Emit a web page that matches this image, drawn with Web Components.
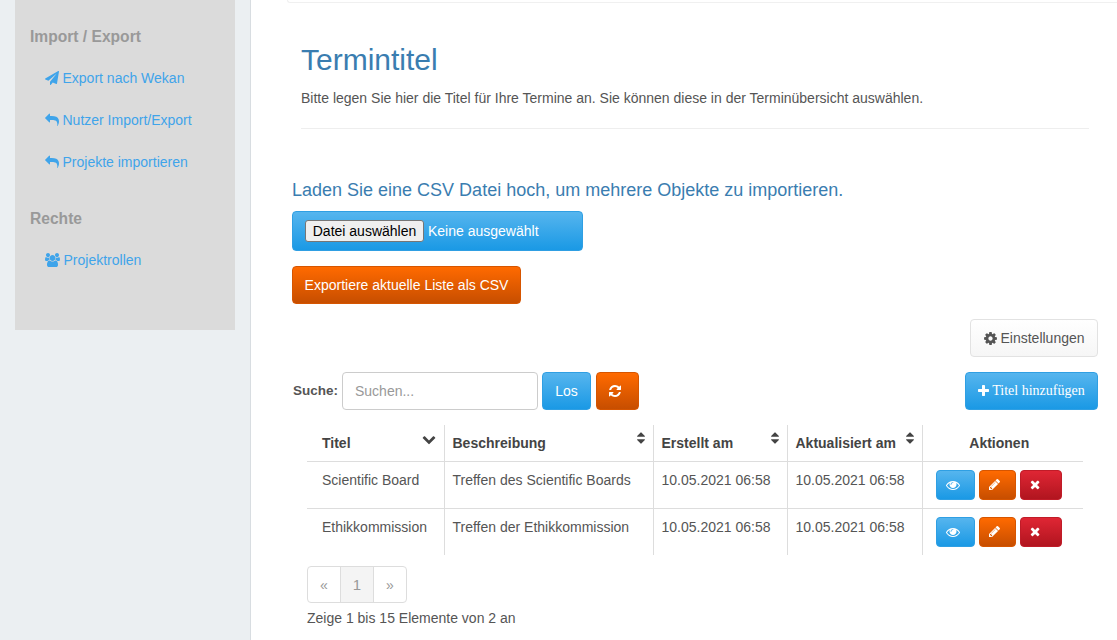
<!DOCTYPE html>
<html lang="de">
<head>
<meta charset="utf-8">
<title>Termintitel</title>
<style>
  html, body { margin: 0; height: 640px; overflow: hidden; }
  body { background: #ebeff2; font: 14px/20px "Liberation Sans", Arial, sans-serif; color: #555; }
</style>
</head>
<body>
<app-shell>
  <side-nav slot="side">
    <side-group heading="Import / Export">
      <side-link icon="plane">Export nach Wekan</side-link>
      <side-link icon="reply">Nutzer Import/Export</side-link>
      <side-link icon="reply">Projekte importieren</side-link>
    </side-group>
    <side-group heading="Rechte">
      <side-link icon="users">Projektrollen</side-link>
    </side-group>
  </side-nav>

  <page-header heading="Termintitel">Bitte legen Sie hier die Titel für Ihre Termine an. Sie können diese in der Terminübersicht auswählen.</page-header>
  <csv-import>Laden Sie eine CSV Datei hoch, um mehrere Objekte zu importieren.</csv-import>
  <ui-btn color="orange" style="--w:229px;--h:38px;margin:15px 0 0 5px">Exportiere aktuelle Liste als CSV</ui-btn>
  <settings-row></settings-row>
  <search-row></search-row>
  <term-table></term-table>
  <page-nav></page-nav>
  <page-info>Zeige 1 bis 15 Elemente von 2 an</page-info>
</app-shell>

<script>
const ICONS = {
  plane: ["0 0 1792 1792", "M1764 11q33 24 27 64l-256 1536q-5 29-32 45-14 8-31 8-11 0-24-5l-453-185-242 295q-18 23-49 23-13 0-22-4-19-7-30.5-23.5t-11.5-36.5v-349l864-1059-1069 925-395-162q-37-14-40-55-2-40 32-59l1664-960q15-9 32-9 20 0 36 11z"],
  reply: ["0 0 1792 1792", "M1792 1120q0 166-127 451-3 7-10.5 24t-13.5 30-13 22q-12 17-28 17-15 0-23.5-10t-8.5-25q0-9 2.5-26.5t2.5-23.5q5-68 5-123 0-101-17.5-181t-48.5-138.5-80-101-105.5-69.5-133-42.5-154-21.5-175.5-6h-224v256q0 26-19 45t-45 19-45-19l-512-512q-19-19-19-45t19-45l512-512q19-19 45-19t45 19 19 45v256h224q713 0 875 403 53 134 53 333z"],
  users: ["0 0 1920 1792", "M593 896q-162 5-265 128h-134q-82 0-138-40.5t-56-118.5q0-353 124-353 6 0 43.5 21t97.5 42.5 119 21.5q67 0 133-23-5 37-5 66 0 139 81 256zm1071 637q0 120-73 189.5t-194 69.5h-874q-121 0-194-69.5t-73-189.5q0-53 3.5-103.5t14-109 26.5-108.5 43-97.5 62-81 85.5-53.5 111.5-20q10 0 43 21.5t73 48 107 48 135 21.5 135-21.5 107-48 73-48 43-21.5q61 0 111.5 20t85.5 53.5 62 81 43 97.5 26.5 108.5 14 109 3.5 103.5zm-1024-1277q0 106-75 181t-181 75-181-75-75-181 75-181 181-75 181 75 75 181zm704 384q0 159-112.5 271.5t-271.5 112.5-271.5-112.5-112.5-271.5 112.5-271.5 271.5-112.5 271.5 112.5 112.5 271.5zm576 225q0 78-56 118.5t-138 40.5h-134q-103-123-265-128 81-117 81-256 0-29-5-66 66 23 133 23 59 0 119-21.5t97.5-42.5 43.5-21q124 0 124 353zm-128-609q0 106-75 181t-181 75-181-75-75-181 75-181 181-75 181 75 75 181z"],
  cog: ["0 0 1792 1792", "M1152 896q0-106-75-181t-181-75-181 75-75 181 75 181 181 75 181-75 75-181zm512-109v222q0 12-8 23t-20 13l-185 28q-19 54-39 91 35 50 107 138 10 12 10 25t-9 23q-27 37-99 108t-94 71q-12 0-26-9l-138-108q-44 23-91 38-16 136-29 186-7 28-36 28h-222q-14 0-24.5-8.5t-11.5-21.5l-28-184q-49-16-90-37l-141 107q-10 9-25 9-14 0-25-11-126-114-165-168-7-10-7-23 0-12 8-23 15-21 51-66.5t54-70.5q-27-50-41-99l-183-27q-13-2-21-12.5t-8-23.5v-222q0-12 8-23t19-13l186-28q14-46 39-92-40-57-107-138-10-12-10-24 0-10 9-23 26-36 98.5-107.5t94.5-71.5q13 0 26 10l138 107q44-23 91-38 16-136 29-186 7-28 36-28h222q14 0 24.5 8.5t11.5 21.5l28 184q49 16 90 37l142-107q9-9 24-9 13 0 25 10 129 119 165 170 7 8 7 22 0 12-8 23-15 21-51 66.5t-54 70.5q26 50 41 98l183 28q13 2 21 12.5t8 23.5z"],
  plus: ["0 0 1408 1792", "M1408 736v192q0 40-28 68t-68 28h-416v416q0 40-28 68t-68 28h-192q-40 0-68-28t-28-68v-416h-416q-40 0-68-28t-28-68v-192q0-40 28-68t68-28h416v-416q0-40 28-68t68-28h192q40 0 68 28t28 68v416h416q40 0 68 28t28 68z"],
  refresh: ["0 0 1536 1792", "M1511 1056q0 5-1 7-64 268-268 434.5t-478 166.5q-146 0-282.5-55t-243.5-157l-129 129q-19 19-45 19t-45-19-19-45v-448q0-26 19-45t45-19h448q26 0 45 19t19 45-19 45l-137 137q71 66 161 102t187 36q134 0 250-65t186-179q11-17 53-117 8-23 30-23h192q13 0 22.5 9.5t9.5 22.5zm25-800v448q0 26-19 45t-45 19h-448q-26 0-45-19t-19-45 19-45l138-138q-148-137-349-137-134 0-250 65t-186 179q-11 17-53 117-8 23-30 23h-199q-13 0-22.5-9.5t-9.5-22.5v-7q65-268 270-434.5t480-166.5q146 0 284 55.5t245 156.5l130-129q19-19 45-19t45 19 19 45z"],
  eye: ["0 0 1792 1792", "M1664 960q-152-236-381-353 61 104 61 225 0 185-131.5 316.5t-316.5 131.5-316.5-131.5-131.5-316.5q0-121 61-225-229 117-381 353 133 205 333.5 326.5t434.5 121.5 434.5-121.5 333.5-326.5zm-720-384q0-20-14-34t-34-14q-125 0-214.5 89.5t-89.5 214.5q0 20 14 34t34 14 34-14 14-34q0-86 61-147t147-61q20 0 34-14t14-34zm848 384q0 34-20 69-140 230-376.5 368.5t-499.5 138.5-499.5-139-376.5-368q-20-35-20-69t20-69q140-229 376.5-368t499.5-139 499.5 139 376.5 368q20 35 20 69z"],
  pencil: ["0 0 1536 1792", "M363 1536l91-91-235-235-91 91v107h128v128h107zm523-928q0-22-22-22-10 0-17 7l-542 542q-7 7-7 17 0 22 22 22 10 0 17-7l542-542q7-7 7-17zm-54-192l416 416-832 832h-416v-416zm683 96q0 53-37 90l-166 166-416-416 166-165q36-38 90-38 53 0 91 38l235 234q37 39 37 91z"],
  times: ["0 0 1408 1792", "M1298 1322q0 40-28 68l-136 136q-28 28-68 28t-68-28l-294-294-294 294q-28 28-68 28t-68-28l-136-136q-28-28-28-68t28-68l294-294-294-294q-28-28-28-68t28-68l136-136q28-28 68-28t68 28l294 294 294-294q28-28 68-28t68 28l136 136q28 28 28 68t-28 68l-294 294 294 294q28 28 28 68z"],
  chevron: ["0 0 1792 1792", "M1683 808l-742 741q-19 19-45 19t-45-19l-742-741q-19-19-19-45.5t19-45.5l166-165q19-19 45-19t45 19l531 531 531-531q19-19 45-19t45 19l166 165q19 19 19 45.5t-19 45.5z"],
  sort: ["0 0 1024 1792", "M1024 1120q0 26-19 45l-448 448q-19 19-45 19t-45-19l-448-448q-19-19-19-45t19-45 45-19h896q26 0 45 19t19 45zm0-448q0 26-19 45t-45 19h-896q-26 0-45-19t-19-45 19-45l448-448q19-19 45-19t45 19l448 448q19 19 19 45z"]
};

function icon(name, size) {
  const [box, d] = ICONS[name];
  const w = box.split(" ")[2] / 1792 * size;
  return `<svg width="${w}" height="${size}" viewBox="${box}" fill="currentColor" aria-hidden="true"><path d="${d}"/></svg>`;
}

class AppShell extends HTMLElement {
  constructor() {
    super();
    this.attachShadow({ mode: "open" }).innerHTML = `
    <style>
      :host { display: flex; height: 640px; }
      .side { width: 250px; flex: none; border-right: 1px solid #d8dde1; box-sizing: content-box; }
      main { flex: 1; min-width: 0; background: #fff; padding-left: 36px; box-sizing: border-box; display: flex; flex-direction: column; align-items: flex-start; }
      .rule { align-self: stretch; height: 2px; border: 1px solid #f0f0f0; border-width: 0 0 1px 1px; border-bottom-left-radius: 3px; flex: none; }
    </style>
    <div class="side"><slot name="side"></slot></div>
    <main><div class="rule"></div><slot></slot></main>`;
  }
}

class SideNav extends HTMLElement {
  constructor() {
    super();
    this.attachShadow({ mode: "open" }).innerHTML = `
    <style>
      :host { display: block; width: 220px; height: 330px; margin-left: 15px; background: #dbdbdb; padding-top: 27px; box-sizing: border-box; }
    </style>
    <slot></slot>`;
  }
}

class SideGroup extends HTMLElement {
  constructor() {
    super();
    this.attachShadow({ mode: "open" }).innerHTML = `
    <style>
      :host { display: block; margin-bottom: 26px; }
      h4 { margin: 0 0 10px 15px; font-size: 15.6px; line-height: 20px; font-weight: bold; color: #999; }
    </style>
    <h4></h4><slot></slot>`;
  }
  connectedCallback() {
    this.shadowRoot.querySelector("h4").textContent = this.getAttribute("heading");
  }
}

class SideLink extends HTMLElement {
  constructor() {
    super();
    this.attachShadow({ mode: "open" }).innerHTML = `
    <style>
      :host { display: flex; align-items: center; height: 42px; padding-left: 30px; color: #3fa4ea; font-size: 14px; }
      .i { display: inline-flex; margin-right: 3.5px; }
    </style>
    <span class="i"></span><slot></slot>`;
  }
  connectedCallback() {
    this.shadowRoot.querySelector(".i").innerHTML = icon(this.getAttribute("icon"), 14);
  }
}

class PageHeader extends HTMLElement {
  constructor() {
    super();
    this.attachShadow({ mode: "open" }).innerHTML = `
    <style>
      :host { display: block; align-self: stretch; margin: 40px 28px 0 14px; padding-bottom: 20px; border-bottom: 1px solid #eee; }
      h1 { margin: 0 0 12px; font-size: 30px; line-height: 33px; font-weight: normal; color: #3a7db0; }
      p { margin: 0; font-size: 14px; line-height: 20px; color: #555; }
    </style>
    <h1></h1><p><slot></slot></p>`;
  }
  connectedCallback() {
    this.shadowRoot.querySelector("h1").textContent = this.getAttribute("heading");
  }
}

class UiBtn extends HTMLElement {
  constructor() {
    super();
    this.attachShadow({ mode: "open" }).innerHTML = `
    <style>
      :host { display: inline-flex; align-items: center; justify-content: center; box-sizing: border-box; flex: none;
        width: var(--w, auto); height: var(--h, 38px); border-radius: 4px; border: 1px solid; font-size: 14px; color: #fff; }
      :host([color=blue]) { background: linear-gradient(#56b5ee, #1a99e5); border-color: #2f9fe3; }
      :host([color=orange]) { background: linear-gradient(#ff6a00, #c74e00); border-color: #d65500; }
      :host([color=red]) { background: linear-gradient(#df2634, #b1151f); border-color: #c01c28; }
      :host([color=light]) { background: linear-gradient(#fff, #f6f6f6); border-color: #e2e2e2; color: #555; }
    </style>
    <slot></slot>`;
  }
}

class CsvImport extends HTMLElement {
  constructor() {
    super();
    this.attachShadow({ mode: "open" }).innerHTML = `
    <style>
      :host { display: block; margin: 51px 0 0 5px; }
      h4 { margin: 0 0 11px; font-size: 18px; line-height: 20px; font-weight: normal; color: #3a7db0; }
      .file { display: flex; align-items: center; box-sizing: border-box; width: 291px; height: 40px; padding-left: 12px; border: 1px solid #2f9fe3; border-radius: 4px;
        background: linear-gradient(#56b5ee, #1a99e5); color: #fff; font-size: 14px; }
      button { font: 14px "Liberation Sans", Arial, sans-serif; color: #000; height: 22px; width: 119px; padding: 0; margin-right: 4px; background: #efefef; border: 1px solid #767676; border-radius: 3px; }
    </style>
    <h4><slot></slot></h4>
    <div class="file"><button type="button">Datei auswählen</button><span>Keine ausgewählt</span></div>`;
  }
}

class SettingsRow extends HTMLElement {
  constructor() {
    super();
    this.attachShadow({ mode: "open" }).innerHTML = `
    <style>
      :host { display: flex; justify-content: flex-end; align-self: stretch; margin: 15px 19px 0 0; }
      svg { margin-right: 2px; }
    </style>
    <ui-btn color="light" style="--w:128px">${icon("cog", 15)}Einstellungen</ui-btn>`;
  }
}

class SearchRow extends HTMLElement {
  constructor() {
    super();
    this.attachShadow({ mode: "open" }).innerHTML = `
    <style>
      :host { display: flex; align-items: center; align-self: stretch; margin: 15px 19px 0 5px; }
      label { font-weight: bold; font-size: 13.5px; color: #555; margin: 0 3px 0 1px; width: 46px; }
      input { box-sizing: border-box; width: 196px; height: 38px; padding: 0 12px; border: 1px solid #ccc; border-radius: 4px; font: 14px "Liberation Sans", Arial, sans-serif; margin-right: 4px; }
      input::placeholder { color: #999; opacity: 1; }
      .add { margin-left: auto; font-family: "Liberation Serif", "Times New Roman", serif; font-size: 14px; }
      .add svg { margin-right: 3px; }
      .re { margin-left: 5px; }
      .re svg { margin-right: 6px; }
    </style>
    <label>Suche:</label><input placeholder="Suchen...">
    <ui-btn color="blue" style="--w:49px">Los</ui-btn>
    <ui-btn class="re" color="orange" style="--w:43px">${icon("refresh", 14)}</ui-btn>
    <ui-btn class="add" color="blue" style="--w:133px">${icon("plus", 14)}Titel hinzufügen</ui-btn>`;
  }
}

class TermTable extends HTMLElement {
  static get rows() {
    return [
      ["Scientific Board", "Treffen des Scientific Boards", "10.05.2021 06:58", "10.05.2021 06:58"],
      ["Ethikkommission", "Treffen der Ethikkommission", "10.05.2021 06:58", "10.05.2021 06:58"]
    ];
  }
  constructor() {
    super();
    const head = ["Titel", "Beschreibung", "Erstellt am", "Aktualisiert am"].map((t, i) =>
      `<th class="${i ? "" : "first"}"><div><span>${t}</span><i class="${i ? "" : "chev"}">${i ? icon("sort", 14) : icon("chevron", 14)}</i></div></th>`).join("");
    const body = TermTable.rows.map(r => `<tr>
        <td class="first">${r[0]}</td><td>${r[1]}</td><td>${r[2]}</td><td>${r[3]}</td>
        <td class="acts"><div>
          <ui-btn color="blue" style="--w:39px;--h:30px"><span class="a" style="margin-right:4px">${icon("eye", 14)}</span></ui-btn>
          <ui-btn color="orange" style="--w:37px;--h:30px"><span class="a" style="margin-right:4px">${icon("pencil", 13)}</span></ui-btn>
          <ui-btn color="red" style="--w:42px;--h:30px"><span class="a" style="margin-right:10px">${icon("times", 13)}</span></ui-btn>
        </div></td></tr>`).join("");
    this.attachShadow({ mode: "open" }).innerHTML = `
    <style>
      :host { display: block; margin: 15px 0 0 20px; }
      table { border-collapse: collapse; table-layout: fixed; width: 776px; font-size: 14px; color: #555; }
      th, td { padding: 0 8px; border-right: 1px solid #ddd; text-align: left; }
      th:last-child, td:last-child { border-right: 0; }
      thead tr { height: 36px; border-bottom: 1px solid #ddd; }
      tbody tr { height: 47px; }
      tbody tr + tr { border-top: 1px solid #ddd; }
      th { font-weight: bold; color: #444; vertical-align: middle; padding-top: 1px; }
      th div { display: flex; justify-content: space-between; }
      th i { display: flex; margin-top: -2px; color: #444; height: 14px; }
      th i.chev { margin-top: -1px; }
      td { vertical-align: top; padding-top: 8px; }
      .first { padding-left: 15px; }
      th.c { text-align: center; padding: 1px 7px 0 0; }
      td.acts { padding: 8px 0 0 13px; }
      .acts div { display: flex; gap: 4px; }
      .a { display: inline-flex; }
    </style>
    <table>
      <colgroup><col style="width:137px"><col style="width:209px"><col style="width:134px"><col style="width:135px"><col style="width:161px"></colgroup>
      <thead><tr>${head}<th class="c">Aktionen</th></tr></thead>
      <tbody>${body}</tbody>
    </table>`;
  }
}

class PageNav extends HTMLElement {
  constructor() {
    super();
    this.attachShadow({ mode: "open" }).innerHTML = `
    <style>
      :host { display: flex; margin: 11px 0 0 20px; height: 37px; box-sizing: border-box; border: 1px solid #ddd; border-radius: 4px; color: #999; font-size: 14px; }
      span { display: flex; align-items: center; justify-content: center; width: 32px; box-sizing: border-box; }
      span:first-child { width: 31px; }
      .on { width: 34px; background: #f4f4f4; border: solid #ddd; border-width: 0 1px; font-size: 15px; }
    </style>
    <span>«</span><span class="on">1</span><span>»</span>`;
  }
}

class PageInfo extends HTMLElement {
  constructor() {
    super();
    this.attachShadow({ mode: "open" }).innerHTML = `
    <style>
      :host { display: block; margin: 5px 0 0 20px; font-size: 14px; line-height: 20px; color: #555; }
    </style>
    <slot></slot>`;
  }
}

customElements.define("ui-btn", UiBtn);
customElements.define("app-shell", AppShell);
customElements.define("side-nav", SideNav);
customElements.define("side-group", SideGroup);
customElements.define("side-link", SideLink);
customElements.define("page-header", PageHeader);
customElements.define("csv-import", CsvImport);
customElements.define("settings-row", SettingsRow);
customElements.define("search-row", SearchRow);
customElements.define("term-table", TermTable);
customElements.define("page-nav", PageNav);
customElements.define("page-info", PageInfo);
</script>
</body>
</html>
